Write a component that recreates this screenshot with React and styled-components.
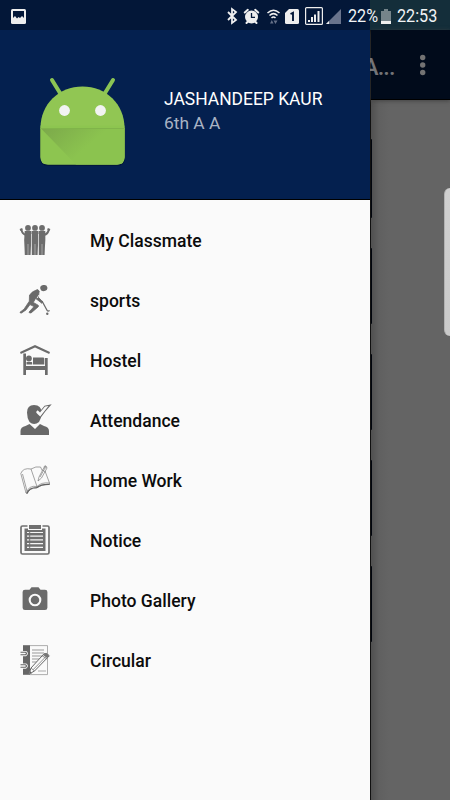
import React from "react";
import styled, { createGlobalStyle } from "styled-components";

const Global = createGlobalStyle`
  * { box-sizing: border-box; }
  body { margin: 0; background: #646464; font-family: Roboto, sans-serif; }
`;
const Screen = styled.div`
  width: 450px; height: 800px; overflow: hidden;
  display: flex; flex-direction: column;
`;
const StatusBar = styled.header`
  height: 30px; flex: none; display: flex; align-items: center; justify-content: space-between;
  padding: 2px 12px 0 11px;
  background: linear-gradient(90deg, #031738 370px, #142e3a 370px);
`;
const StatusGroup = styled.div`display: flex; align-items: center;`;
const Glyph = styled.svg`
  display: block; flex: none; overflow: visible;
  width: ${p => p.$w}px; height: ${p => p.$h || p.$w}px; margin-right: ${p => p.$gap || 0}px;
`;
const StatusText = styled.span`
  display: block; width: ${p => p.$w}px; margin-right: ${p => p.$gap || 0}px;
  font-size: 18.4px; line-height: 22px; color: #f1f3f5; white-space: nowrap;
  transform: scaleX(.88); transform-origin: left;
`;
const Body = styled.div`display: flex; flex: 1; min-height: 0;`;
const Drawer = styled.aside`width: 370px; flex: none; background: #fafafa; position: relative; z-index: 1;`;
const Profile = styled.section`
  height: 170px; background: #04204f; border-bottom: 1px solid #000;
  display: flex; padding: 47px 0 0 39px;
`;
const Identity = styled.div`padding: 11px 0 0 38px;`;
const Name = styled.div`color: #fff; font-size: 17.45px; line-height: 23px; white-space: nowrap;`;
const Grade = styled.div`color: #a9b3c4; font-size: 17.4px; line-height: 24px;`;
const Menu = styled.nav`padding-top: 10px;`;
const MenuItem = styled.div`
  height: 60px; padding-left: 20px; display: flex; align-items: center; gap: 40px;
`;
const Label = styled.span`
  padding-top: 2px; color: #0c0c0c; font-size: 17.55px; font-weight: 500; white-space: nowrap;
`;
const Page = styled.main`
  position: relative; flex: 1; background: linear-gradient(90deg, #505050, #606060 8px, #646464 18px);
  border-left: 1px solid #111;
`;
const Toolbar = styled.div`
  height: 70px; background: #010b1b; border-bottom: 1px solid #000;
  box-shadow: 0 1px 4px #444; display: flex; justify-content: space-between; align-items: center;
  padding-right: 24px;
`;
const Title = styled.div`
  color: #737477; font-size: 23.5px; font-weight: 500; line-height: 30px; letter-spacing: -.9px;
  margin: 4px 0 0 -8px; white-space: nowrap;
`;
const CardEdges = styled.div`padding-top: 39px; display: grid; gap: 30px;`;
const CardEdge = styled.div`
  width: 1px; height: ${p => p.$h}px; background: #02060e; border-radius: 0 2px 2px 0;
`;
const EdgePanel = styled.div`
  position: absolute; right: 0; top: 158px; width: 6px; height: 148px;
  border-radius: 6px 0 0 6px; border-left: 1px solid #b2b2b2;
  background: linear-gradient(#d0d0d0, #cacaca);
`;

const Android = () => (
  <Glyph $w={87} $h={90} viewBox="0 0 87 90">
    <defs>
      <linearGradient id="fold" x1="0" y1="0" x2="1" y2=".5">
        <stop offset="0" stopColor="#7ba84a" /><stop offset=".65" stopColor="#8bc34f" />
      </linearGradient>
    </defs>
    <path d="M1 52v29q0 8 8 8h69q8 0 8-8V52z" fill="#021534" opacity=".7" />
    <path d="M13 3l8 13M74 3l-8 13" stroke="#8bc454" strokeWidth="4" strokeLinecap="round" />
    <path d="M1.5 51C1.5 27 20 9.500 43.500 9.500S85.500 27 85.500 51v29q0 7.500-7.500 7.500H9q-7.500 0-7.500-7.500z" fill="#91c653" />
    <path d="M1.5 48.500h84v31.500q0 7.500-7.500 7.500H9q-7.500 0-7.500-7.500z" fill="#8dc550" />
    <path d="M1.5 51h84v29q0 7.500-7.500 7.500H37z" fill="url(#fold)" />
    <path d="M1.500 51.500h84" stroke="#80b44a" />
    <circle cx="25.500" cy="33.500" r="5.400" fill="#f2f3f2" /><circle cx="61.500" cy="33.500" r="5.400" fill="#f2f3f2" />
  </Glyph>
);

const Classmates = () => <g fill="#6d6d6d">
  {[8, 15, 22].map(x => <g key={x}><circle cx={x} cy="2.900" r="2.900" />
    <path d={`M${x - 3.300} 6h6.600q.3 9-.4 16.500l-.3 7.500h-5.800l-.3-7.500q-.7-7.500.2-16.500z`} /></g>)}
  <path d="M6 10Q2 9 1.500 4.500M24 10q4-1 4.800-5.500M0 5l2.500-1M27.500 4l2.500 1" fill="none" stroke="#6d6d6d" strokeWidth="2" />
  <path d="M11.500 9v21M18.500 9v21" stroke="#e1e1e1" strokeWidth=".8" />
  <path d="M8 19v11M15 19v11M22 19v11" stroke="#dcdcdc" strokeWidth=".5" />
</g>;
const Sports = () => <g fill="#6a6a6a">
  <ellipse cx="23.800" cy="3" rx="3.600" ry="3" transform="rotate(-12 24 3)" />
  <path stroke="#6a6a6a" strokeWidth=".8" strokeLinejoin="round" d="M17.500 4.500l1.700 1.500-.8 6.300 4.500 4.700-1 1.300-6.300-4.900-2.300 4 4.800 2.800q1 .8 0 1.700l-7 6q-2 .5-2.100-.8l5-5.500-4-2-4 5.300-4.500 3.100q-1.400.4-1.500-.8l4-3 5.300-8 .2-6.200q3-4 8-5.500z" />
  <path d="M19 10l-2 3.200" stroke="#fafafa" strokeWidth=".9" />
  <path d="M22 16l5 9.200q.7 1.500 2.600.3" fill="none" stroke="#6a6a6a" strokeWidth="1.300" />
  <circle cx="27.300" cy="28.700" r="1.200" />
</g>;
const Hostel = () => <g fill="#6b6b6b">
  <path d="M0 7L15 0l15 7-.8 2L15 2.600.8 9z" />
  <path d="M3.300 8.500H6V21h19v-8h2.700v17H25v-5H6v5H3.300z" />
  <path d="M13 12.500h10q1.300 0 1.300 1v6H13zM6.500 17h5q.7 0 .7.700v1.800H6.500z" />
  <circle cx="8.900" cy="13.500" r="2.900" />
</g>;
const Attendance = () => <g fill="#686868">
  <path d="M.5 30v-4q0-4 5-5l4-2 5.500 5 5-5 4 2q5 1 5 5v4z" />
  <path d="M14 0q7.500 0 7.500 7.500 0 5.500-2.500 9.500-5 4-9.500 0-2.500-4-2.500-9.500Q7 0 14 0z" />
  <path d="M16 7l1.700-1.800L20 7.500l5-6 4.500-1-5 5.700-4.300 5.800-3.200-3z" fill="none" stroke="#686868" strokeWidth="1.600" />
  <path d="M16 7l1.700-1.800L20 7.500l5-6 3.500-.5-4 5-4.300 5.500-3.200-3z" fill="#fafafa" />
</g>;
const Homework = () => <g fill="none" stroke="#747474" strokeWidth=".65">
  <path d="M.8 8.500Q3 2.500 11 4l6 17.500Q9 20 6 28z" /><path d="M11 4q5-3 9.500-2l2 4M25 6l4.500 12q-8-1-12.500 3.500" />
  <path d="M2.500 9l4.500 17M17 21.500l-.5 1.700q-7-.5-9.500 5.500L6 28M16.800 23q5-4 12.700-3.500V18" />
  <path d="M7 28.500q2-6 10-6 4-3.500 12.500-3.200" stroke="#606060" strokeWidth="1.200" />
  <path d="M18 16l1-4L24 2.500Q26-.3 27 3L21.500 13z" fill="#fafafa" /><path d="M22.500 5l3 2M20 12l5-9" /><circle cx="25.200" cy="1.900" r="1" />
</g>;
const Notice = () => <g>
  <path d="M7.500 1h-5Q1 1 1 2.500v25Q1 29 2.500 29h25q1.500 0 1.500-1.500v-25Q29 1 27.500 1h-5" fill="none" stroke="#707070" strokeWidth="1.700" />
  <path d="M4.500 3.500H8V5h14V3.500h3.500V26h-21zM9 0h12v4H9z" fill="#707070" />
  {[7.500, 11.200, 14.900, 18.600, 22.300].map(y => <path key={y} d={`M7 ${y}h2.200m1 0H23`} stroke="#f5f5f5" strokeWidth="1.200" />)}
</g>;
const Camera = () => <g>
  <path d="M5 4.700h4.500l2-2.400H18.500l2 2.400H25q2.400 0 2.400 2.200v15.900q0 2.200-2.400 2.200H5q-2.400 0-2.400-2.200V6.900q0-2.200 2.400-2.200z" fill="#6b6b6b" />
  <circle cx="15" cy="15" r="5.300" fill="#6b6b6b" stroke="#fafafa" strokeWidth="2.100" />
</g>;
const Circular = () => <g>
  <path d="M3 .2h7v29.600H3z" fill="#666" /><path d="M10 .6h17.500v29H10" fill="none" stroke="#999" strokeWidth=".8" />
  <path d="M12 5h12M12 8h12M12 11h11M12 14h9M12 17h7" stroke="#999" strokeWidth="1" />
  {[8.500, 21].map(y => <path key={y} d={`M0 ${y - 1.200}h5.500q2 1.200 0 2.500H0`} fill="none" stroke="#fafafa" strokeWidth="2.800" />)}
  {[8.500, 21].map(y => <path key={y} d={`M.5 ${y - 1.200}h5q2 1.200 0 2.500h-5`} fill="none" stroke="#666" strokeWidth="1.100" />)}
  <path d="M9 29l2-6L24 8.800q3-1.500 5.300 2L14.500 26z" fill="#fafafa" stroke="#666" strokeWidth="1" />
  <path d="M11 23l3.500 3M13 24.800L26 11.500M22 10.700l4.700 3" fill="none" stroke="#777" strokeWidth=".8" />
  <path d="M23 10l2-1.300q3-1 4 2.300l-2 2z" fill="#777" /><path d="M9 29l1-2.700 2 1.600zM18 26h8" fill="#555" stroke="#888" strokeWidth=".7" />
</g>;

const items = [
  ["My Classmate", Classmates], ["sports", Sports], ["Hostel", Hostel], ["Attendance", Attendance],
  ["Home Work", Homework], ["Notice", Notice], ["Photo Gallery", Camera], ["Circular", Circular],
];

export default function App() {
  return (
    <Screen>
      <Global />
      <StatusBar>
        <Glyph $w={15} viewBox="0 0 15 15">
          <rect width="15" height="15" rx="1.500" fill="#eee" /><path d="M2 2h11v7l-2-2-2 2-1.500-1L6 9.500 4 7 2 9z" fill="#031738" />
        </Glyph>
        <StatusGroup>
          <Glyph $w={10} $h={16} $gap={7} viewBox="0 0 10 16"><path d="M1 4l8 8-4 3V1l4 3-8 8" fill="none" stroke="#eee" strokeWidth="1.800" /></Glyph>
          <Glyph $w={15} $gap={8} viewBox="0 0 15 15">
            <circle cx="7.500" cy="8" r="6.500" fill="#eee" /><path d="M.8 3.500l3-2.700M11.200.8l3 2.700M2.500 14l2-2M12.500 14l-2-2" stroke="#eee" strokeWidth="2" strokeLinecap="round" />
            <path d="M7.500 4v4.300H11" fill="none" stroke="#031738" strokeWidth="1.300" />
          </Glyph>
          <Glyph $w={13} $h={15} $gap={5} viewBox="0 0 13 15">
            <path d="M.5 4q6-5.500 12 0M2.500 6.500q4-3.700 8 0M4.500 9q2-2 4 0" fill="none" stroke="#eee" strokeWidth="1.500" />
            <path d="M3 14.500l1.800-3.500 1.700 3.500zM6.500 11.500h4L8.500 15z" fill="#667188" />
          </Glyph>
          <Glyph $w={14} $h={15} $gap={6} viewBox="0 0 14 15"><path d="M4 0h8.500Q14 0 14 1.500v12q0 1.500-1.500 1.500h-11Q0 15 0 13.500V4z" fill="#eee" /><path d="M5.500 5L8 3.800V12" stroke="#031738" strokeWidth="1.900" fill="none" /></Glyph>
          <Glyph $w={18} $h={18} $gap={3} viewBox="0 0 18 18"><rect x=".6" y=".6" width="16.800" height="16.800" rx="1" fill="none" stroke="#eee" strokeWidth="1.200" /><path d="M4 15v-2M7 15v-5M10 15V7.500M13.500 15V4" stroke="#eee" strokeWidth="2" /></Glyph>
          <Glyph $w={15} $gap={7} viewBox="0 0 15 15"><path d="M15 0v15H0z" fill="#69748c" /><path d="M0 15l3-3v3z" fill="#eee" /></Glyph>
          <StatusText $w={30} $gap={3}>22%</StatusText>
          <Glyph $w={10} $h={15} $gap={6} viewBox="0 0 10 15"><path d="M3 0h4v2h3v10H0V2h3z" fill="#75848a" /><path d="M0 12h10v3H0z" fill="#eee" /></Glyph>
          <StatusText $w={41}>22:53</StatusText>
        </StatusGroup>
      </StatusBar>
      <Body>
        <Drawer>
          <Profile>
            <Android />
            <Identity><Name>JASHANDEEP KAUR</Name><Grade>6th A A</Grade></Identity>
          </Profile>
          <Menu>
            {items.map(([label, Icon]) => (
              <MenuItem key={label}><Glyph $w={30} viewBox="0 0 30 30"><Icon /></Glyph><Label>{label}</Label></MenuItem>
            ))}
          </Menu>
        </Drawer>
        <Page>
          <Toolbar>
            <Title>A...</Title>
            <Glyph $w={6} $h={22} viewBox="0 0 6 22">{[3.500, 11, 18.500].map(y => <circle key={y} cx="2.700" cy={y} r="2.700" fill="#737373" />)}</Glyph>
          </Toolbar>
          <CardEdges>{[79, 76, 76, 76, 76].map((h, i) => <CardEdge key={i} $h={h} />)}</CardEdges>
          <EdgePanel />
        </Page>
      </Body>
    </Screen>
  );
}
